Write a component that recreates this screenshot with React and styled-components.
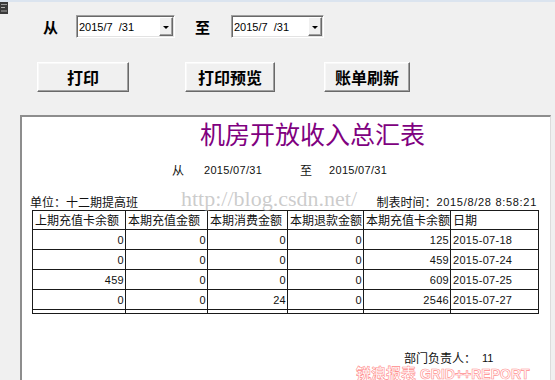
import React from 'react';
import styled, { createGlobalStyle } from 'styled-components';

const Global = createGlobalStyle`
  html, body { margin: 0; padding: 0; background: #f0f0f0; overflow: hidden; }
  body { font-family: "Noto Sans CJK SC", sans-serif; color: #000; }
  * { box-sizing: border-box; }
`;

const CJK = '"Noto Sans CJK SC", "Noto Sans", sans-serif';
const NUM = '"Liberation Sans", Arial, sans-serif';

const Window = styled.div`
  width: 555px;
  height: 380px;
  overflow: hidden;
  background: #f0f0f0;
  display: flex;
  flex-direction: column;
`;

const TitleStrip = styled.div`
  height: 15px;
  border-top: 2px solid #dbe4ef;
  display: flex;
  align-items: flex-start;
`;

const DateRow = styled.div`
  height: 23px;
  padding-left: 43px;
  display: flex;
  align-items: center;
`;

const Label = styled.span`
  width: 15px;
  font-family: ${CJK};
  font-weight: 700;
  font-size: 15px;
  line-height: 16px;
  margin-left: ${(p) => p.$before || 0}px;
  margin-right: ${(p) => p.$after || 0}px;
`;

const Picker = styled.div`
  width: ${(p) => p.$w}px;
  height: 23px;
  background: #fff;
  border: 1px solid;
  border-color: #a0a0a0 #ffffff #ffffff #a0a0a0;
  box-shadow: inset 1px 1px 0 #696969, inset -1px -1px 0 #e3e3e3;
  display: flex;
  align-items: center;
  padding-left: 2px;
  font-family: ${NUM};
  font-size: 11px;
  white-space: pre;
`;

const DropBtn = styled.div`
  margin-left: auto;
  margin-right: 1px;
  width: 14px;
  height: 19px;
  background: #f0f0f0;
  border: 1px solid;
  border-color: #ffffff #696969 #696969 #ffffff;
  box-shadow: inset -1px -1px 0 #a0a0a0;
  display: flex;
  align-items: center;
  justify-content: center;
  &::after {
    content: '';
    border-left: 3px solid transparent;
    border-right: 3px solid transparent;
    border-top: 3px solid #000;
    margin-top: 1px;
  }
`;

const ButtonRow = styled.div`
  margin-top: 24px;
  height: 30px;
  padding-left: 37px;
  display: flex;
`;

const Button = styled.button`
  width: ${(p) => p.$w}px;
  height: 30px;
  margin: 0 0 0 ${(p) => p.$ml || 0}px;
  padding: 0;
  background: #f0f0f0;
  border: 1px solid;
  border-color: #ffffff #696969 #696969 #ffffff;
  box-shadow: inset -1px -1px 0 #a0a0a0, inset 1px 1px 0 #f8f8f8;
  font-family: ${CJK};
  font-weight: 700;
  font-size: 16px;
  color: #000;
`;

const Panel = styled.div`
  position: relative;
  margin: 23px 0 0 20px;
  width: 531px;
  flex: 1;
  background: #fff;
  border-top: 2px solid #8d8d8d;
  border-left: 2px solid #8d8d8d;
  border-right: 1px solid #dcdcdc;
  display: flex;
  flex-direction: column;
  overflow: hidden;
`;

const ReportTitle = styled.div`
  margin-top: 4px;
  padding-left: 178px;
  font-family: ${CJK};
  font-size: 25px;
  line-height: 25px;
  color: #800080;
`;

const RangeRow = styled.div`
  margin-top: 18px;
  height: 12px;
  padding-left: 150px;
  display: flex;
  align-items: center;
`;

const Field = styled.span`
  margin-left: ${(p) => p.$ml || 0}px;
  font-family: ${(p) => (p.$num ? NUM : CJK)};
  font-size: ${(p) => (p.$num ? 11 : 12)}px;
  letter-spacing: ${(p) => p.$ls || 0}px;
  line-height: 12px;
  white-space: pre;
  color: #111;
`;

const InfoRow = styled.div`
  margin-top: 19px;
  height: 14px;
  padding: 0 13px 0 8px;
  display: flex;
  align-items: center;
`;

const Spacer = styled.span`
  flex: 1;
`;

const Grid = styled.div`
  margin: 1px 0 0 10px;
  display: grid;
  grid-template-columns: 93px 82px 80px 76px 87px 88px;
  grid-template-rows: 19px 20px 20px 20px 20px 4px;
  width: 507px;
  border-top: 1px solid #1a1a1a;
  border-left: 1px solid #1a1a1a;
`;

const Cell = styled.div`
  border-right: 1px solid #1a1a1a;
  border-bottom: 1px solid #1a1a1a;
  display: flex;
  align-items: center;
  justify-content: ${(p) => (p.$right ? 'flex-end' : 'flex-start')};
  padding: 0 1px 0 2px;
  font-family: ${(p) => (p.$head ? CJK : NUM)};
  font-size: ${(p) => (p.$head ? 12 : 11)}px;
  letter-spacing: ${(p) => (p.$head ? 0 : 0.3)}px;
  line-height: 12px;
  white-space: nowrap;
  overflow: hidden;
  color: #111;
`;

const Footer = styled.div`
  margin-top: 38px;
  padding-left: 382px;
  display: flex;
  align-items: center;
  height: 12px;
`;

const Stamp = styled.div`
  margin-top: 2px;
  height: 14px;
  padding-left: 334px;
  font-family: ${NUM};
  font-weight: 700;
  font-size: 14px;
  line-height: 14px;
  color: #fff;
  -webkit-text-stroke: 0.6px #ff8c8c;
  white-space: pre;
`;

const StampCjk = styled.span`
  font-family: ${CJK};
  font-size: 15px;
`;

const UrlMark = styled.div`
  position: absolute;
  left: 159px;
  top: 73px;
  font-family: "Liberation Serif", "Times New Roman", serif;
  font-size: 22px;
  line-height: 17px;
  color: rgba(170, 170, 170, 0.6);
  white-space: pre;
  pointer-events: none;
`;

const AppIcon = () => (
  <svg width="8" height="12" viewBox="0 0 8 12">
    <rect x="0" y="0" width="8" height="12" fill="#3a3a3a" />
    <rect x="1" y="2" width="6" height="1" fill="#9a9a9a" />
    <rect x="1" y="5" width="4" height="1" fill="#b0b0b0" />
    <rect x="1" y="8" width="6" height="2" fill="#707070" />
  </svg>
);

const headers = ['上期充值卡余额', '本期充值金额', '本期消费金额', '本期退款金额', '本期充值卡余额', '日期'];
const rows = [
  ['0', '0', '0', '0', '125', '2015-07-18'],
  ['0', '0', '0', '0', '459', '2015-07-24'],
  ['459', '0', '0', '0', '609', '2015-07-25'],
  ['0', '0', '24', '0', '2546', '2015-07-27'],
];

export default function App() {
  return (
    <Window>
      <Global />
      <TitleStrip>
        <AppIcon />
      </TitleStrip>
      <DateRow>
        <Label $after={18}>从</Label>
        <Picker $w={99}>
          {'2015/7  /31'}
          <DropBtn />
        </Picker>
        <Label $before={20} $after={21}>至</Label>
        <Picker $w={93}>
          {'2015/7  /31'}
          <DropBtn />
        </Picker>
      </DateRow>
      <ButtonRow>
        <Button $w={92}>打印</Button>
        <Button $w={90} $ml={56}>打印预览</Button>
        <Button $w={86} $ml={49}>账单刷新</Button>
      </ButtonRow>
      <Panel>
        <UrlMark>http://blog.csdn.net/</UrlMark>
        <ReportTitle>机房开放收入总汇表</ReportTitle>
        <RangeRow>
          <Field>从</Field>
          <Field $num $ls={0.3} $ml={20}>2015/07/31</Field>
          <Field $ml={38}>至</Field>
          <Field $num $ls={0.3} $ml={17}>2015/07/31</Field>
        </RangeRow>
        <InfoRow>
          <Field>单位：十二期提高班</Field>
          <Spacer />
          <Field>制表时间：</Field>
          <Field $num $ls={0.7}>2015/8/28 8:58:21</Field>
        </InfoRow>
        <Grid>
          {headers.map((h) => (
            <Cell key={h} $head>{h}</Cell>
          ))}
          {rows.map((r, i) =>
            r.map((v, j) => (
              <Cell key={`${i}-${j}`} $right={j < 5}>{v}</Cell>
            ))
          )}
          {headers.map((h) => (
            <Cell key={`end-${h}`} />
          ))}
        </Grid>
        <Footer>
          <Field>部门负责人：</Field>
          <Field $num $ml={6}>11</Field>
        </Footer>
        <Stamp>
          <StampCjk>锐浪报表</StampCjk> GRID++REPORT
        </Stamp>
      </Panel>
    </Window>
  );
}
